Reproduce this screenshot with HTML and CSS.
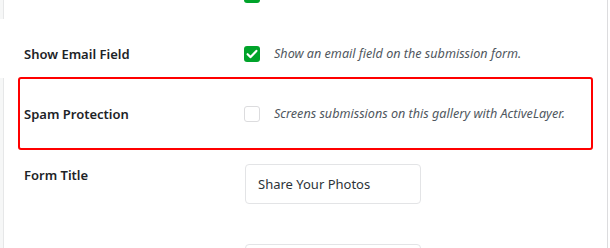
FILE: index.html
```html
<!DOCTYPE html>
<html>
<head>
<meta charset="utf-8">
<link rel="stylesheet" href="styles.css">
</head>
<body>
<div class="page">
  <div class="edge">
    <div class="seg seg-top"></div>
    <div class="seg-gap"></div>
    <div class="seg seg-bottom"></div>
  </div>
  <div class="main">
    <div class="row row-cut">
      <div class="label"></div>
      <div class="control">
        <span class="cb on"><svg viewBox="0 0 16 16" width="16" height="16"><path d="M3.6 8.2 L6.6 11.1 L12.4 4.9" fill="none" stroke="#fff" stroke-width="2.2" stroke-linecap="round" stroke-linejoin="round"/></svg></span>
      </div>
    </div>
    <div class="row row-email">
      <div class="label">Show Email Field</div>
      <div class="control">
        <span class="cb on"><svg viewBox="0 0 16 16" width="16" height="16"><path d="M3.6 8.2 L6.6 11.1 L12.4 4.9" fill="none" stroke="#fff" stroke-width="2.2" stroke-linecap="round" stroke-linejoin="round"/></svg></span>
        <span class="desc">Show an email field on the submission form.</span>
      </div>
    </div>
    <div class="highlight">
      <div class="row">
        <div class="label">Spam Protection</div>
        <div class="control">
          <span class="cb off"></span>
          <span class="desc">Screens submissions on this gallery with ActiveLayer.</span>
        </div>
      </div>
    </div>
    <div class="row row-title">
      <div class="label label-top">Form Title</div>
      <div class="control control-top">
        <div class="input">Share Your Photos</div>
      </div>
    </div>
    <div class="row row-next">
      <div class="label"></div>
      <div class="control control-top">
        <div class="input"></div>
      </div>
    </div>
  </div>
</div>
</body>
</html>
```

FILE: styles.css
```css
* { box-sizing: border-box; }
html, body { margin: 0; padding: 0; background: #fff; }
body { font-family: "Noto Sans", "Open Sans", sans-serif; }

.page {
  width: 610px;
  height: 248px;
  overflow: hidden;
  display: flex;
  background: #fff;
}

.edge {
  width: 4px;
  display: flex;
  flex-direction: column;
  flex-shrink: 0;
}
.seg {
  background: #f6f7f7;
  border-right: 1px solid #e6e7e8;
}
.seg-top { height: 19px; }
.seg-gap { height: 59px; }
.seg-bottom { flex: 1; }

.main {
  width: 604px;
  border-right: 1px solid #dcdcde;
  flex-shrink: 0;
}

.row {
  display: grid;
  grid-template-columns: 220px 1fr;
  padding-left: 20px;
  align-items: center;
}
.row-cut { margin-top: -13px; height: 16px; }
.row-email { margin-top: 42px; height: 16px; }

.label {
  font-size: 13px;
  font-weight: 600;
  color: #1d2327;
  line-height: 16px;
  white-space: nowrap;
}

.control {
  display: flex;
  align-items: center;
  gap: 14px;
}

.cb {
  width: 16px;
  height: 16px;
  border-radius: 3px;
  flex-shrink: 0;
  display: block;
}
.cb svg { display: block; }
.cb.on { background: #00a32a; }
.cb.off { border: 1px solid #dcdcde; background: #fff; }

.desc {
  font-size: 12.6px;
  font-style: italic;
  color: #50575e;
  white-space: nowrap;
}

.highlight {
  margin-top: 16px;
  margin-left: 14px;
  width: 575px;
  border: 2px solid #ff0000;
  border-radius: 3px;
  padding: 26px 0 27px 4px;
}
.highlight .row { padding-left: 0; height: 16px; }

.row-title { margin-top: 14px; align-items: start; }
.row-next { margin-top: 40px; align-items: start; }
.label-top { padding-top: 1px; font-size: 13px; line-height: 20px; }
.control-top { padding-left: 1px; }

.input {
  width: 176px;
  height: 40px;
  border: 1px solid #e3e4e6;
  border-radius: 4px;
  padding-left: 12px;
  font-size: 13px;
  line-height: 38px;
  color: #2c3338;
}
```
